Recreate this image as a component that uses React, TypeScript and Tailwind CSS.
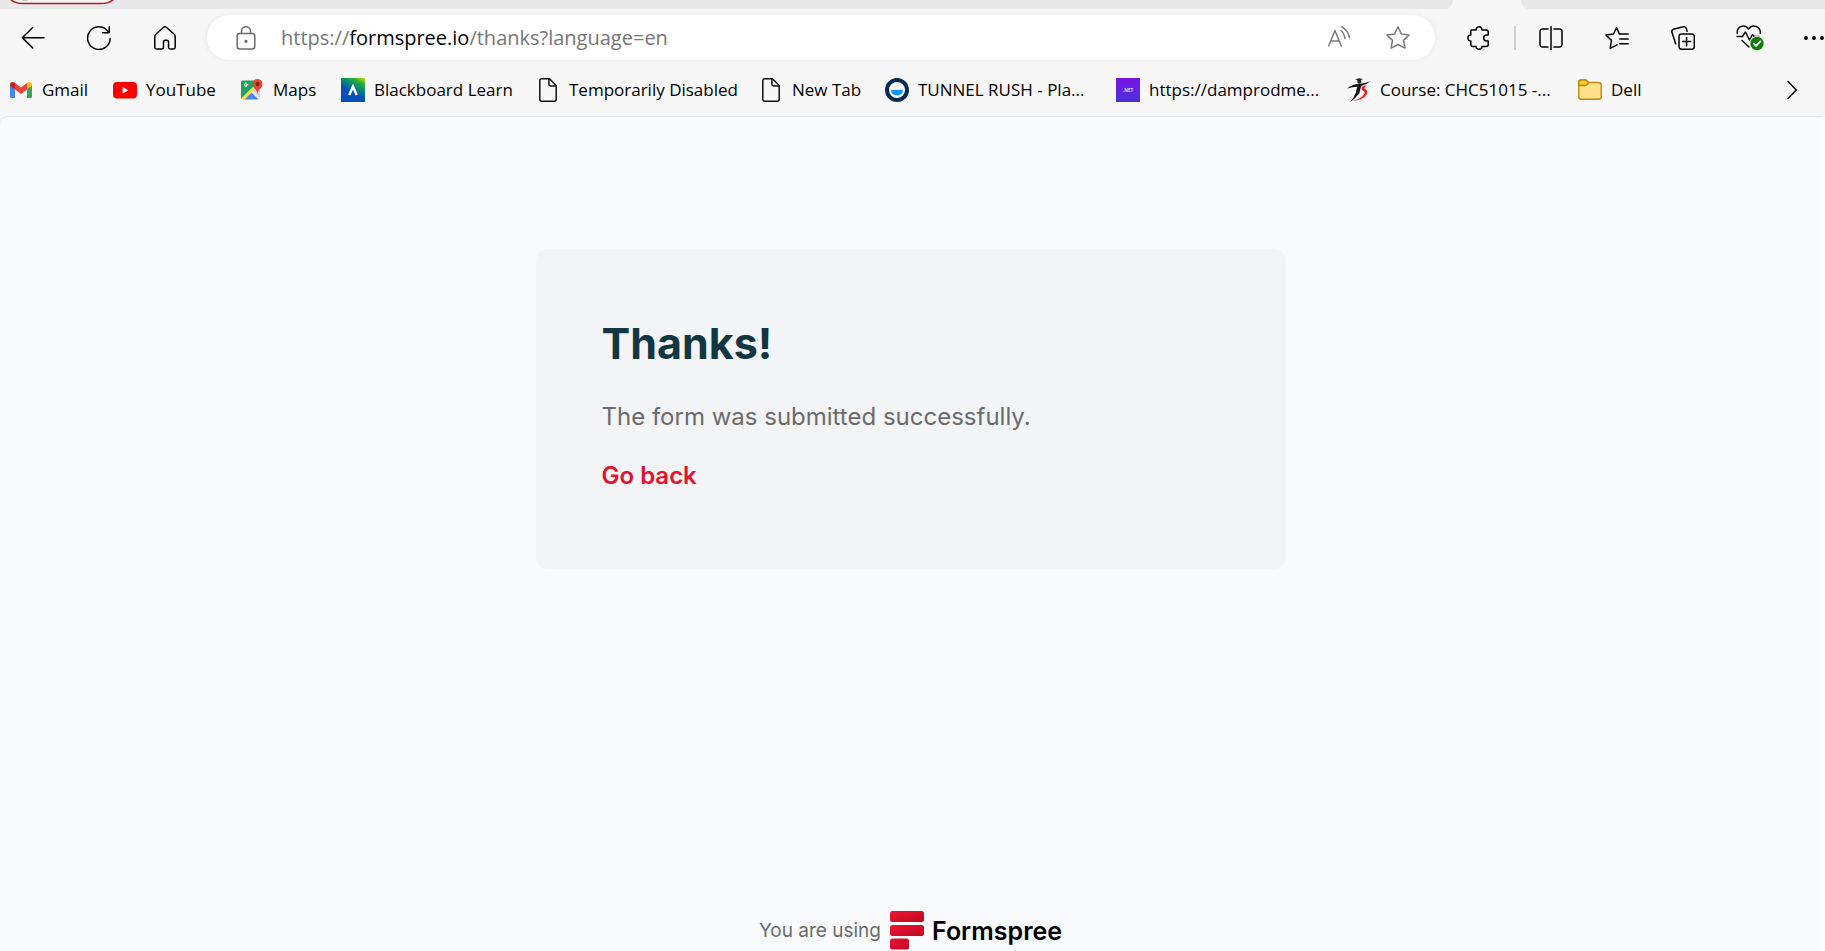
import React from 'react';

type IconProps = { children: React.ReactNode; className?: string; sw?: number };

function Icon({ children, className = 'size-6', sw = 1.5 }: IconProps) {
  return (
    <svg
      viewBox="0 0 24 24"
      className={`shrink-0 ${className}`}
      fill="none"
      stroke="currentColor"
      strokeWidth={sw}
      strokeLinecap="round"
      strokeLinejoin="round"
      aria-hidden="true"
    >
      {children}
    </svg>
  );
}

function ToolButton({ label, children }: { label: string; children: React.ReactNode }) {
  return (
    <button type="button" aria-label={label} className="flex h-12 w-[66px] shrink-0 items-center justify-center text-black">
      {children}
    </button>
  );
}

const GmailIcon = (
  <svg viewBox="0 0 24 24" className="size-6" aria-hidden="true">
    <path d="M1 6.5v12A1.5 1.5 0 0 0 2.500 20H6V10z" fill="#4285f4" />
    <path d="M18 10v10h3.500a1.500 1.500 0 0 0 1.500-1.500v-12z" fill="#34a853" />
    <path d="M18 5v6.500l5-3.800V6.500C23 4 20.400 3.200 18.600 4.500z" fill="#fbbc04" />
    <path d="M6 11.500V5l6 4.500L18 5v6.500L12 16z" fill="#ea4335" />
    <path d="M1 6.500v1.200l5 3.800V5l-.6-.5C3.600 3.200 1 4 1 6.500z" fill="#c5221f" />
  </svg>
);

const YouTubeIcon = (
  <svg viewBox="0 0 24 24" className="size-6" aria-hidden="true">
    <rect x="0" y="4" width="24" height="16.500" rx="4" fill="#f00" />
    <path d="M9.700 9v6.500l5.500-3.250z" fill="#fff" />
  </svg>
);

const MapsIcon = (
  <svg viewBox="0 0 24 24" className="size-6" aria-hidden="true">
    <rect x="1" y="2.500" width="19" height="19" rx="2" fill="#e4e6e8" />
    <path d="M3 2.500h12L13 9.500 1 21V4.500a2 2 0 0 1 2-2z" fill="#1fa35c" />
    <path d="M1.300 20.500 12.500 9.300l2.300 2.300-9.700 9.900H3a2 2 0 0 1-1.700-1z" fill="#fddc4a" />
    <path d="M4.500 21.500 11.500 14.800l7 6.700z" fill="#4a87f0" />
    <path d="m13.500 12.800 6.500 6.700V12z" fill="#cfd3d7" />
    <path d="M8.300 6.500H6.200v1h1c-.2 1.600-2.700 1.300-2.700-.7 0-1.700 1.600-2.100 2.500-1.200" fill="none" stroke="#fff" strokeWidth="1" />
    <path d="M17.500 1a5 5 0 0 0-5 5c0 4.500 4.300 4.500 5 10 .7-5.500 5-5.500 5-10a5 5 0 0 0-5-5z" fill="#e24436" />
    <circle cx="17.500" cy="6" r="1.900" fill="#7e2018" />
  </svg>
);

const BlackboardIcon = (
  <svg viewBox="0 0 24 24" className="size-6" aria-hidden="true">
    <defs>
      <linearGradient id="bb" x1="1" y1="0" x2="0.450" y2="1">
        <stop offset="0" stopColor="#c8f000" />
        <stop offset=".22" stopColor="#2fae3a" />
        <stop offset=".42" stopColor="#07906a" />
        <stop offset=".68" stopColor="#0450b8" />
        <stop offset="1" stopColor="#0450c0" />
      </linearGradient>
    </defs>
    <rect width="24" height="24" fill="url(#bb)" />
    <path d="M8.300 17 12 8.500l3.700 8.500" fill="none" stroke="#fff" strokeWidth="2.400" />
  </svg>
);

const PageIcon = (
  <svg viewBox="0 0 24 24" className="size-6" fill="none" stroke="#111" strokeWidth="1.500" strokeLinejoin="round" aria-hidden="true">
    <path d="M5.700.8h7.800l6.700 6.700v13.700a2 2 0 0 1-2 2H5.800a2 2 0 0 1-2-2V2.800a2 2 0 0 1 1.900-2z" />
    <path d="M12.900 1v5.300a1.700 1.700 0 0 0 1.700 1.700h5.400" />
  </svg>
);

const TunnelIcon = (
  <svg viewBox="0 0 24 24" className="size-6" aria-hidden="true">
    <circle cx="12" cy="12" r="10" fill="#fff" stroke="#052c52" strokeWidth="4" />
    <path d="M5.800 12.200q6.200-1 12.400 0a6.300 6.300 0 0 1-12.400 0z" fill="#0d99ff" />
  </svg>
);

const NetIcon = (
  <svg viewBox="0 0 24 24" className="size-6" aria-hidden="true">
    <defs>
      <linearGradient id="net" x1="0" y1="0" x2="0" y2="1">
        <stop offset="0" stopColor="#7a12e6" />
        <stop offset="1" stopColor="#4a32d8" />
      </linearGradient>
    </defs>
    <rect width="24" height="24" fill="url(#net)" />
    <text x="12" y="13.500" textAnchor="middle" fontFamily="Open Sans, sans-serif" fontSize="4.500" fontWeight="700" fill="#e6d8fb">.NET</text>
  </svg>
);

const CourseIcon = (
  <svg viewBox="0 0 24 24" className="size-6" aria-hidden="true">
    <path d="m8 1.200 4.500-1 3.500 1-2 .8.300 2.500q-2 2.500-3.800.3L10.300 2z" fill="#222" />
    <path d="M.2 10.500Q5.500 5.800 12 6q6-.8 11.500-2.700-3.500 3-9 4.400-1.300 3-2.200 7.500-3.600 5-9.300 9 4.500-5.500 6-9.700.3-3.500 1.500-5.800Q6 8.600.2 10.500z" fill="#111" />
    <path d="M20 7.500q-5.500.1-5.500 3 0 1.500 2 2.500 2 1.200.5 3.500Q14 20.500 5.500 23q10.500-1 13.800-6 2.200-3.700-.8-5.400-2-1.300-.8-2.300.8-.9 2.300-1.800z" fill="#f0141c" />
  </svg>
);

const FolderIcon = (
  <svg viewBox="0 0 24 24" className="size-6" fill="none" stroke="#b98a07" strokeWidth="1.400" strokeLinejoin="round" aria-hidden="true">
    <path d="M.8 4.500a2.500 2.500 0 0 1 2.500-2.500h4.500l3 2.500h9.700a2.700 2.700 0 0 1 2.700 2.700v11.600a2.500 2.500 0 0 1-2.500 2.500H3.300a2.500 2.500 0 0 1-2.500-2.500z" fill="#ffe08a" />
    <path d="M.8 4.500a2.500 2.500 0 0 1 2.500-2.500h4.500l3 2.500-2.300 2.400a2 2 0 0 1-1.500.6H.8z" fill="#fbcb35" />
  </svg>
);

const bookmarks = [
  { label: 'Gmail', icon: GmailIcon, width: 'w-[104px]' },
  { label: 'YouTube', icon: YouTubeIcon, width: 'w-[127px]' },
  { label: 'Maps', icon: MapsIcon, width: 'w-[101px]' },
  { label: 'Blackboard Learn', icon: BlackboardIcon, width: 'w-[195px]' },
  { label: 'Temporarily Disabled', icon: PageIcon, width: 'w-[223px]' },
  { label: 'New Tab', icon: PageIcon, width: 'w-[126px]' },
  { label: 'TUNNEL RUSH - Pla...', icon: TunnelIcon, width: 'w-[231px]' },
  { label: 'https://damprodme...', icon: NetIcon, width: 'w-[231px]' },
  { label: 'Course: CHC51015 -...', icon: CourseIcon, width: 'w-[231px]' },
  { label: 'Dell', icon: FolderIcon, width: 'w-[90px]' },
];

function TabStrip() {
  return (
    <div className="flex h-[9px] bg-[#f7f7f7]">
      <div className="flex grow items-start overflow-hidden rounded-br-lg bg-[#e8e8e8] pl-2">
        <svg viewBox="0 0 110 5" className="h-[5px] w-[110px]" fill="none" aria-hidden="true">
          <path d="M2-1Q7 3.600 15 3.600H93Q101 3.600 106-1" fill="#f3f3f3" stroke="#b3191f" strokeWidth="1.500" />
          <path d="M11-1q6 3 12 0z" fill="#999" />
        </svg>
      </div>
      <div className="w-[68px] shrink-0" />
      <div className="w-[304px] shrink-0 rounded-bl-lg bg-[#e8e8e8]" />
    </div>
  );
}

function Toolbar() {
  return (
    <div className="flex h-[57px] items-center overflow-hidden">
      <ToolButton label="Back">
        <Icon><path d="M23 11.700H1.300M11.700 1.500 1.300 11.700l10.400 10.200" /></Icon>
      </ToolButton>
      <ToolButton label="Refresh">
        <Icon><path d="M23.200 12.500A11.300 11.300 0 1 1 20.500 4.800l1.700 1.900M22.300.8v6h-6.500" /></Icon>
      </ToolButton>
      <ToolButton label="Home">
        <Icon><path d="M1.800 10.500a3 3 0 0 1 1-2.200l7.600-6.800a2.400 2.400 0 0 1 3.200 0l7.600 6.800a3 3 0 0 1 1 2.200v10.800a1.600 1.600 0 0 1-1.600 1.600h-3.500a1.600 1.600 0 0 1-1.600-1.600v-5.500a1.600 1.600 0 0 0-1.600-1.600h-1.800a1.600 1.600 0 0 0-1.600 1.600v5.500a1.600 1.600 0 0 1-1.600 1.600H3.400a1.600 1.600 0 0 1-1.600-1.600z" /></Icon>
      </ToolButton>
      <div className="ml-[9px] flex h-[45px] min-w-0 grow items-center rounded-full bg-white pl-[27px] shadow-[0_0_6px_rgba(0,0,0,0.07)]">
        <button type="button" aria-label="View site information" className="text-[#6b6b6b]">
          <Icon><rect x="3.200" y="7.500" width="17.600" height="15.500" rx="2.500" /><path d="M7.500 7.500V5.200a4.500 4.500 0 0 1 9 0v2.300" /><circle cx="12" cy="15.300" r=".9" fill="currentColor" /></Icon>
        </button>
        <div role="textbox" aria-label="Address" tabIndex={0} className="ml-[23px] grow truncate text-[20px] leading-7 text-[#767676]">
          https://<span className="text-black">formspree.io</span>/thanks?language=en
        </div>
        <button type="button" aria-label="Read aloud" className="w-11 text-[#7b7b7b]">
          <Icon className="mx-auto size-6"><path d="M1.500 20.500 8 4.500l6.500 16M3.700 15h8.600" strokeLinecap="butt" /><path d="M14 4.500q3 2.500 4 8M15 .8q6 3.500 7.500 10.700" /></Icon>
        </button>
        <button type="button" aria-label="Add to favorites" className="w-[74px] text-[#7b7b7b]">
          <Icon className="mx-auto size-6"><path d="M12 .9 15.400 7.900l7.700 1.100-5.600 5.400 1.400 7.700L12 18.500l-6.900 3.600 1.400-7.700L.9 9l7.700-1.100z" /></Icon>
        </button>
      </div>
      <div className="w-[11px] shrink-0" />
      <ToolButton label="Extensions">
        <Icon><path d="M4.800 4h4.300c0-1 .2-3.200 2.900-3.200S14.900 3 14.900 4h4.300a2 2 0 0 1 2 2v3h-1.500a3 3 0 0 0 0 6h1.500v3.500a2 2 0 0 1-2 2H15c0 1.500-.9 2.700-3 2.700s-3-1.200-3-2.700H5.800a2 2 0 0 1-2-2V15C2.300 15 .9 14 .9 12s1.400-3 2.900-3V5a1 1 0 0 1 1-1z" /></Icon>
      </ToolButton>
      <div className="mx-[2px] h-6 w-[2px] shrink-0 bg-[#d0d0d0]" />
      <ToolButton label="Split screen">
        <Icon><path d="M12 0v24M9 3H3.500A2.500 2.500 0 0 0 1 5.500v13A2.500 2.500 0 0 0 3.500 21H9M15 3h5.500A2.500 2.500 0 0 1 23 5.500v13a2.500 2.500 0 0 1-2.500 2.500H15" /></Icon>
      </ToolButton>
      <ToolButton label="Favorites">
        <Icon><path d="M14.800 7.900h8.400M14.800 12.900h8.400M14.800 17.700h8.400M14.800 7.900h-.5L11.600 1.500 8.500 7.900.9 9l5.600 5.400-1.300 8L12 18.800" /></Icon>
      </ToolButton>
      <ToolButton label="Collections">
        <Icon><rect x="8" y="8" width="15.300" height="15.300" rx="2.500" /><path d="M15.600 11.500v8.200M11.500 15.600h8.200M4.700 17.700 1 6.500a2.500 2.500 0 0 1 1.500-3.200L12.300.8a2.500 2.500 0 0 1 3 1.700l.8 2.700" /></Icon>
      </ToolButton>
      <ToolButton label="Browser essentials">
        <svg viewBox="0 0 30 27" className="ml-[4px] h-[27px] w-[30px] shrink-0" fill="none" stroke="#111" strokeWidth="1.500" strokeLinecap="round" strokeLinejoin="round" aria-hidden="true">
          <path d="M1.300 9.500C.3 2.500 8.500-.7 12.500 5 16.500-.7 25 2.500 24.300 9.500M1 12.500h5.500L9.500 8l4 8 3-5.500 1.500 2h5M6 16.500l7 6.500" />
          <circle cx="21" cy="19.500" r="7.500" fill="#f7f7f7" stroke="none" />
          <circle cx="21" cy="19.500" r="6.700" fill="#107c10" stroke="none" />
          <path d="m17.800 19.700 2.300 2.200 4.300-4.600" stroke="#fff" strokeWidth="1.700" />
        </svg>
      </ToolButton>
      <button type="button" aria-label="Settings and more" className="flex w-[43px] shrink-0 items-center pl-[20px]">
        <svg viewBox="0 0 24 24" className="size-6 shrink-0" aria-hidden="true">
          <circle cx="4" cy="12" r="1.900" /><circle cx="12" cy="12" r="1.900" /><circle cx="20" cy="12" r="1.900" />
        </svg>
      </button>
    </div>
  );
}

function BookmarksBar() {
  return (
    <nav aria-label="Bookmarks" className="flex h-[50px] items-center overflow-hidden pb-[2px] pl-[9px]">
      {bookmarks.map((b) => (
        <a key={b.label} href="#" className={`flex shrink-0 items-center gap-[9px] whitespace-nowrap text-[17px] leading-6 text-black ${b.width}`}>
          {b.icon}
          {b.label}
        </a>
      ))}
      <button type="button" aria-label="More bookmarks" className="ml-auto mr-[21px] shrink-0">
        <Icon className="size-6"><path d="m8 3.500 8.300 8.500L8 20.500" /></Icon>
      </button>
    </nav>
  );
}

export default function App() {
  return (
    <div className="flex min-h-screen flex-col bg-[#f7f7f7] font-['Open_Sans','Noto_Sans',sans-serif]">
      <TabStrip />
      <Toolbar />
      <BookmarksBar />
      <div className="flex grow flex-col items-center rounded-tl-lg border-r-4 border-t border-r-[#fcfcfc] border-t-[#e6e6e8] bg-[#f9fafc] font-['Inter',sans-serif]">
        <main className="mt-[132px] flex h-[320px] w-[750px] max-w-full flex-col items-start rounded-xl bg-[#f3f4f6] px-[66px] pt-[66px]">
          <h1 className="text-[43px] font-bold leading-[56px] text-[#123642]">Thanks!</h1>
          <p className="mt-7 text-[24px] leading-9 text-[#6b6b6b]">The form was submitted successfully.</p>
          <a href="#" className="mt-[23px] text-[24px] font-semibold leading-9 text-[#e5122e]">Go back</a>
        </main>
        <footer className="mt-auto flex items-center gap-[9px] text-[19px] leading-6 text-[#6b6b6b]">
          <span>You are using</span>
          <a href="#" className="flex items-center gap-2 text-[25px] font-semibold leading-10 text-black">
            <svg viewBox="0 0 34 40" className="h-10 w-[34px]" aria-hidden="true">
              <defs>
                <linearGradient id="fs" x1="0" y1="0" x2="1" y2="1">
                  <stop offset="0" stopColor="#ee1433" />
                  <stop offset="1" stopColor="#bd0a22" />
                </linearGradient>
              </defs>
              <rect y="0" width="34" height="11" rx="2.500" fill="url(#fs)" />
              <rect y="14" width="34" height="11" rx="2.500" fill="url(#fs)" />
              <rect y="27.500" width="19" height="11" rx="2.500" fill="url(#fs)" />
            </svg>
            Formspree
          </a>
        </footer>
      </div>
    </div>
  );
}
